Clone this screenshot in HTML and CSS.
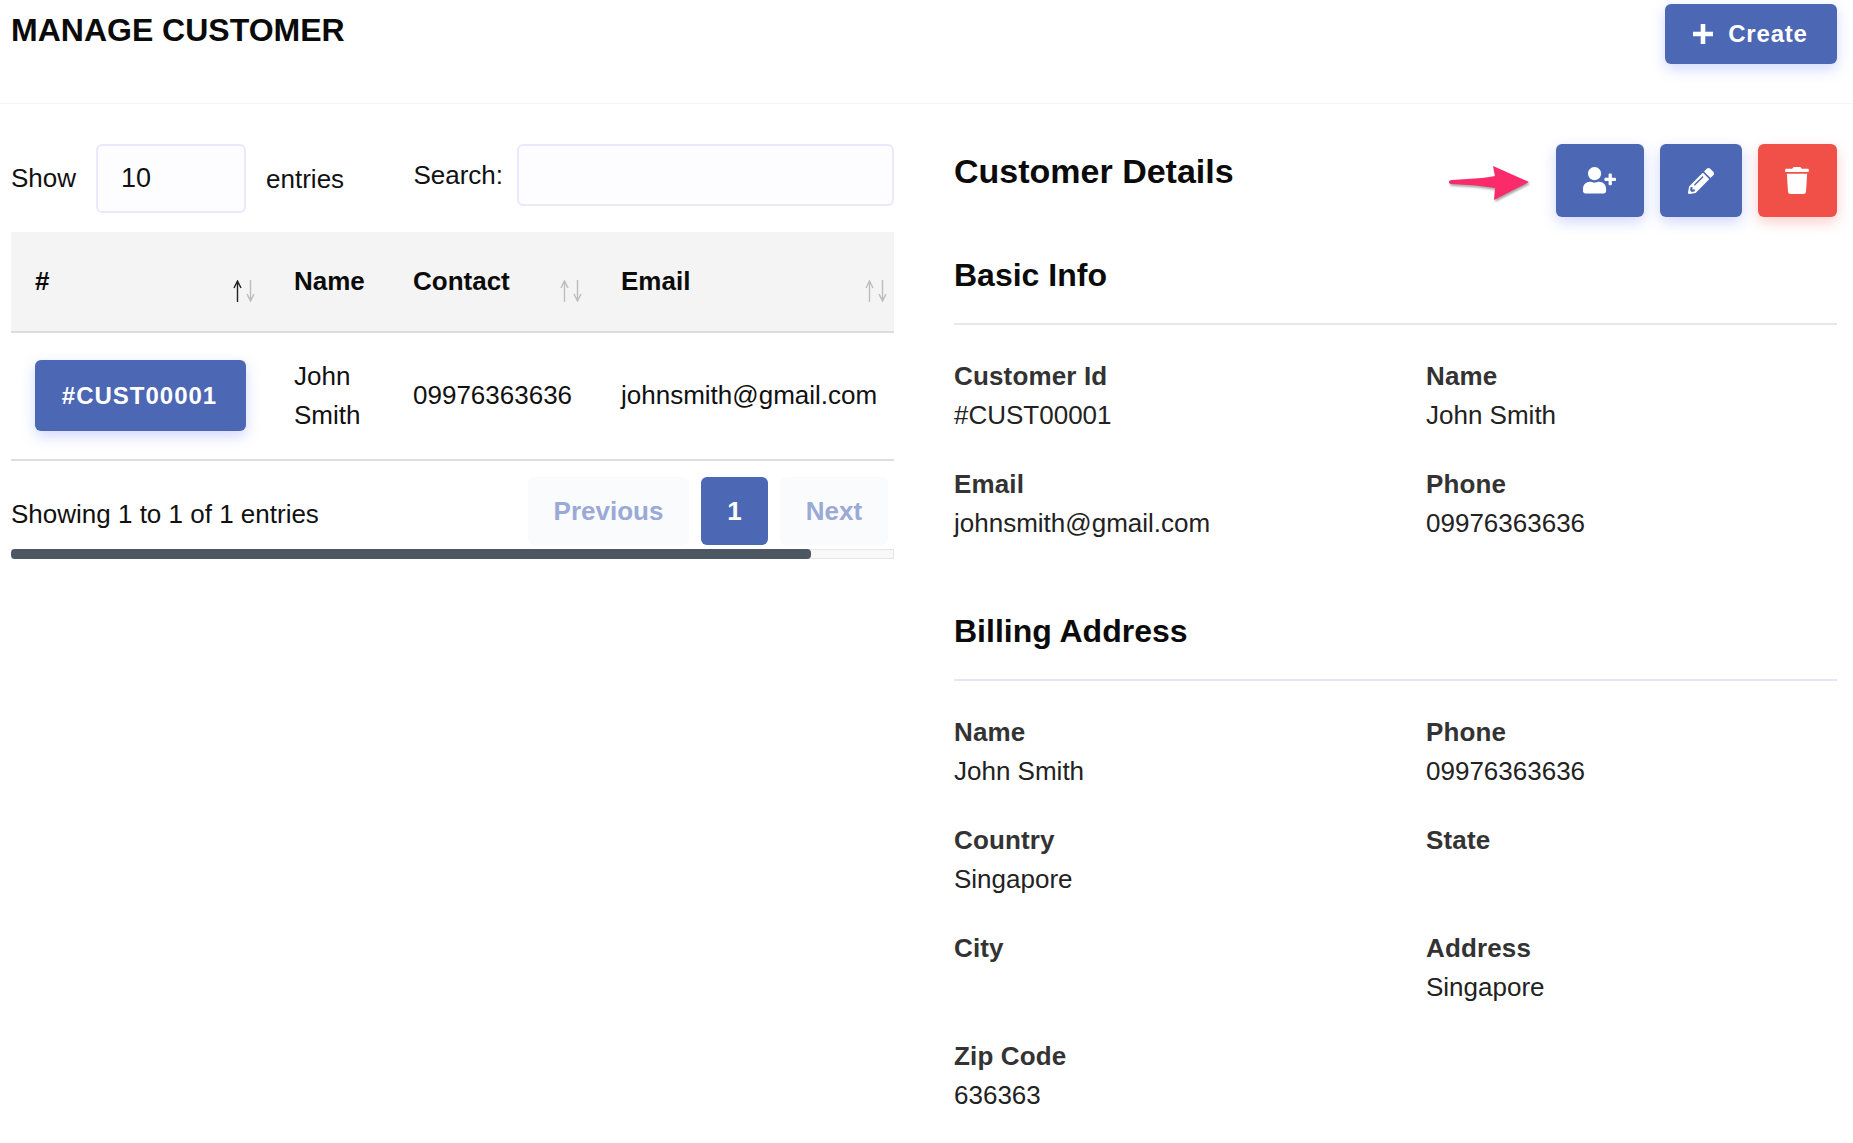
FILE: index.html
```html
<!DOCTYPE html>
<html lang="en">
<head>
<meta charset="utf-8">
<title>Manage Customer</title>
<link rel="stylesheet" href="styles.css">
</head>
<body>
<header class="top">
  <h1 class="title">MANAGE CUSTOMER</h1>
  <button class="btn create">
    <svg class="plus" viewBox="0 0 22 22"><path d="M11 1v20M1 11h20"/></svg>
    <span>Create</span>
  </button>
</header>
<main class="main">
  <section class="list">
    <div class="controls">
      <div class="length">
        <span>Show</span>
        <span class="input select">10</span>
        <span>entries</span>
      </div>
      <div class="filter">
        <span>Search:</span>
        <span class="input search"></span>
      </div>
    </div>
    <table class="table">
      <colgroup>
        <col class="c1"><col class="c2"><col class="c3"><col class="c4">
      </colgroup>
      <thead>
        <tr>
          <th>#<span class="sort"><svg class="ar on" viewBox="0 0 9 22"><path d="M4.500 22V1M1 8 4.500 1 8 8"/></svg><svg class="ar" viewBox="0 0 9 22"><path d="M4.500 0V21M1 14l3.500 7 3.500-7"/></svg></span></th>
          <th>Name</th>
          <th>Contact<span class="sort"><svg class="ar" viewBox="0 0 9 22"><path d="M4.500 22V1M1 8 4.500 1 8 8"/></svg><svg class="ar" viewBox="0 0 9 22"><path d="M4.500 0V21M1 14l3.500 7 3.500-7"/></svg></span></th>
          <th>Email<span class="sort last"><svg class="ar" viewBox="0 0 9 22"><path d="M4.500 22V1M1 8 4.500 1 8 8"/></svg><svg class="ar" viewBox="0 0 9 22"><path d="M4.500 0V21M1 14l3.500 7 3.500-7"/></svg></span></th>
        </tr>
      </thead>
      <tbody>
        <tr>
          <td class="up"><span class="badge">#CUST00001</span></td>
          <td>John Smith</td>
          <td class="up">09976363636</td>
          <td class="up email">johnsmith@gmail.com</td>
        </tr>
      </tbody>
    </table>
    <div class="foot">
      <span class="info">Showing 1 to 1 of 1 entries</span>
      <nav class="pager">
        <span class="page prev">Previous</span>
        <span class="page cur">1</span>
        <span class="page next">Next</span>
      </nav>
    </div>
    <div class="scroll"><div class="thumb"></div></div>
  </section>
  <section class="details">
    <div class="dhead">
      <h2 class="dtitle">Customer Details</h2>
      <div class="actions">
        <svg class="arrow" viewBox="0 0 84 38"><path d="M1 17 Q1 15 4 15 L34 13 Q42 12 47 11 L45 1 L81 17 L46 35 L47 23 Q30 20 4 19 Q1 19 1 17Z"/></svg>
        <button class="act add"><svg class="i-user" viewBox="0 0 640 512"><path d="M624 208h-64v-64c0-8.800-7.200-16-16-16h-32c-8.800 0-16 7.200-16 16v64h-64c-8.800 0-16 7.200-16 16v32c0 8.800 7.200 16 16 16h64v64c0 8.800 7.200 16 16 16h32c8.800 0 16-7.200 16-16v-64h64c8.800 0 16-7.200 16-16v-32c0-8.800-7.200-16-16-16zm-400 48c70.700 0 128-57.300 128-128S294.700 0 224 0 96 57.300 96 128s57.300 128 128 128zm89.600 32h-16.700c-22.200 10.200-46.900 16-72.900 16s-50.600-5.800-72.900-16h-16.700C60.200 288 0 348.200 0 422.400V464c0 26.500 21.500 48 48 48h352c26.500 0 48-21.500 48-48v-41.600c0-74.200-60.200-134.400-134.400-134.400z"/></svg></button>
        <button class="act edit"><svg class="i-pen" viewBox="0 0 512 512"><path d="M497.900 142.100l-46.100 46.100c-4.700 4.700-12.300 4.700-17 0l-111-111c-4.700-4.700-4.700-12.300 0-17l46.100-46.100c18.700-18.700 49.100-18.700 67.900 0l60.100 60.100c18.800 18.700 18.800 49.100 0 67.900zM284.200 99.800L21.600 362.400.4 483.900c-2.900 16.400 11.400 30.600 27.800 27.800l121.500-21.300 262.600-262.600c4.700-4.700 4.700-12.300 0-17l-111-111c-4.800-4.700-12.400-4.700-17.100 0zM124.100 339.900c-5.500-5.500-5.500-14.300 0-19.800l154-154c5.500-5.500 14.300-5.500 19.800 0s5.500 14.300 0 19.800l-154 154c-5.500 5.500-14.300 5.500-19.800 0zM88 424h48v36.300l-64.500 11.300-31.100-31.100L51.700 376H88v48z"/></svg></button>
        <button class="act del"><svg class="i-trash" viewBox="0 0 448 512"><path d="M432 32H312l-9.400-18.700A24 24 0 0 0 281.100 0H166.800a23.720 23.720 0 0 0-21.400 13.300L136 32H16A16 16 0 0 0 0 48v32a16 16 0 0 0 16 16h416a16 16 0 0 0 16-16V48a16 16 0 0 0-16-16zM53.200 467a48 48 0 0 0 47.900 45h245.800a48 48 0 0 0 47.900-45L416 128H32z"/></svg></button>
      </div>
    </div>
    <h3 class="sect first">Basic Info</h3>
    <dl class="grid">
      <div class="field"><dt>Customer Id</dt><dd>#CUST00001</dd></div>
      <div class="field"><dt>Name</dt><dd>John Smith</dd></div>
      <div class="field"><dt>Email</dt><dd>johnsmith@gmail.com</dd></div>
      <div class="field"><dt>Phone</dt><dd>09976363636</dd></div>
    </dl>
    <h3 class="sect second">Billing Address</h3>
    <dl class="grid">
      <div class="field"><dt>Name</dt><dd>John Smith</dd></div>
      <div class="field"><dt>Phone</dt><dd>09976363636</dd></div>
      <div class="field"><dt>Country</dt><dd>Singapore</dd></div>
      <div class="field"><dt>State</dt><dd></dd></div>
      <div class="field"><dt>City</dt><dd></dd></div>
      <div class="field"><dt>Address</dt><dd>Singapore</dd></div>
      <div class="field"><dt>Zip Code</dt><dd>636363</dd></div>
    </dl>
  </section>
</main>
</body>
</html>
```
FILE: styles.css
```css
* { box-sizing: border-box; }
html, body { margin: 0; background: #fff; }
body {
  font-family: "Liberation Sans", Arial, sans-serif;
  font-size: 26px;
  line-height: 39px;
  color: #111;
  overflow: hidden;
  height: 1143px;
}
.top {
  height: 104px;
  padding: 4px 16px 0 11px;
  display: flex;
  justify-content: space-between;
  align-items: flex-start;
  border-bottom: 1px solid #f6f6f6;
}
.title {
  margin: 6px 0 0;
  font-size: 32px;
  line-height: 40px;
  font-weight: 700;
  color: #0b0b0b;
}
.btn, .act {
  border: 0;
  padding: 0;
  color: #fff;
  background: #4c67b3;
  border-radius: 6px;
  box-shadow: 0 5px 14px rgba(90, 110, 255, .28);
  font-family: inherit;
  display: flex;
  align-items: center;
  justify-content: center;
}
.create {
  width: 172px;
  height: 60px;
  gap: 14px;
  padding-right: 2px;
  font-size: 24px;
  font-weight: 700;
  letter-spacing: .8px;
}
.plus { width: 22px; height: 22px; }
.plus path { stroke: #fff; stroke-width: 4.6; fill: none; }
.main {
  display: grid;
  grid-template-columns: 883px 883px;
  gap: 60px;
  padding: 40px 16px 0 11px;
}
.controls {
  height: 88px;
  display: flex;
  justify-content: space-between;
  align-items: flex-start;
}
.length, .filter { display: flex; align-items: center; }
.length span:last-child { margin-left: 20px; margin-top: 2px; }
.filter span:first-child { margin-right: 14px; }
.input {
  display: block;
  border: 2px solid #e9e9fb;
  border-radius: 6px;
  background: #fdfdff;
}
.select {
  width: 150px;
  height: 69px;
  margin-left: 20px;
  padding: 13px 23px;
  font-size: 27px;
}
.search { width: 377px; height: 62px; }
.table {
  width: 883px;
  table-layout: fixed;
  border-collapse: collapse;
  border-bottom: 2px solid #ddd;
}
.c1 { width: 259px; }
.c2 { width: 119px; }
.c3 { width: 208px; }
.c4 { width: 297px; }
th {
  position: relative;
  height: 100px;
  background: #f4f4f4;
  border-bottom: 2px solid #ddd;
  padding: 0 24px;
  text-align: left;
  font-weight: 700;
  color: #0b0b0b;
}
td {
  height: 128px;
  padding: 0 0 0 24px;
  vertical-align: middle;
}
td.up { padding-bottom: 2px; }
td.email { white-space: nowrap; }
.sort {
  position: absolute;
  right: 15px;
  top: 48px;
  display: flex;
  gap: 4px;
}
.sort.last { right: 7px; }
.ar { display: block; width: 9px; height: 22px; }
.ar path { fill: none; stroke: #bdbdbd; stroke-width: 1.4; }
.ar.on path { stroke: #222; }
.badge {
  display: flex;
  align-items: center;
  justify-content: center;
  width: 211px;
  height: 71px;
  padding-right: 2px;
  background: #4c67b3;
  color: #fff;
  border-radius: 6px;
  font-size: 24px;
  font-weight: 700;
  letter-spacing: 1px;
  box-shadow: 0 5px 14px rgba(90, 110, 255, .28);
}
.foot {
  display: flex;
  justify-content: space-between;
  align-items: flex-start;
  padding: 16px 6px 0 0;
  height: 88px;
}
.info { margin-top: 18px; }
.pager { display: flex; gap: 12px; font-weight: 700; }
.page {
  height: 68px;
  display: flex;
  align-items: center;
  justify-content: center;
  border-radius: 6px;
  background: #fafbfd;
  color: #9aa9d6;
}
.prev { width: 161px; }
.cur { width: 67px; background: #4c67b3; color: #fff; }
.next { width: 108px; }
.scroll {
  height: 10px;
  background: #f8f8f8;
  border: 1px solid #e6e6e6;
  border-left: 0;
  position: relative;
}
.thumb {
  position: absolute;
  left: 0;
  top: -1px;
  width: 800px;
  height: 10px;
  border-radius: 4px;
  background: #4d5761;
}
.dhead {
  height: 73px;
  display: flex;
  justify-content: space-between;
  align-items: flex-start;
}
.dtitle {
  margin: 7px 0 0;
  font-size: 34px;
  line-height: 40px;
  font-weight: 700;
  color: #0b0b0b;
}
.actions { display: flex; align-items: center; }
.arrow { width: 84px; height: 38px; margin: 6px 24px 0 0; filter: drop-shadow(1px 2px 1px rgba(0,0,0,.35)); }
.arrow path { fill: #fa2a6b; }
.act { height: 73px; }
.add { width: 88px; padding-right: 2px; }
.edit { width: 82px; margin-left: 16px; }
.del { width: 79px; margin-left: 16px; padding-right: 1px; background: #f05047; box-shadow: 0 5px 14px rgba(240, 80, 70, .28); }
.i-user { width: 33px; height: 26.4px; fill: #fff; }
.i-pen { width: 26px; height: 26px; fill: #fff; }
.i-trash { width: 24px; height: 27px; fill: #fff; }
.sect {
  margin: 0;
  font-size: 32px;
  line-height: 40px;
  font-weight: 700;
  color: #0b0b0b;
  padding-bottom: 28px;
  border-bottom: 2px solid #e6e6f5;
}
.sect.first { margin-top: 38px; }
.sect.second { margin-top: 68px; }
.grid {
  margin: 0;
  padding-top: 32px;
  display: grid;
  grid-template-columns: 472px 411px;
  row-gap: 30px;
}
.field { min-height: 78px; }
dt { font-weight: 700; color: #333; letter-spacing: .15px; }
dd { margin: 0; min-height: 39px; color: #222; }
```
